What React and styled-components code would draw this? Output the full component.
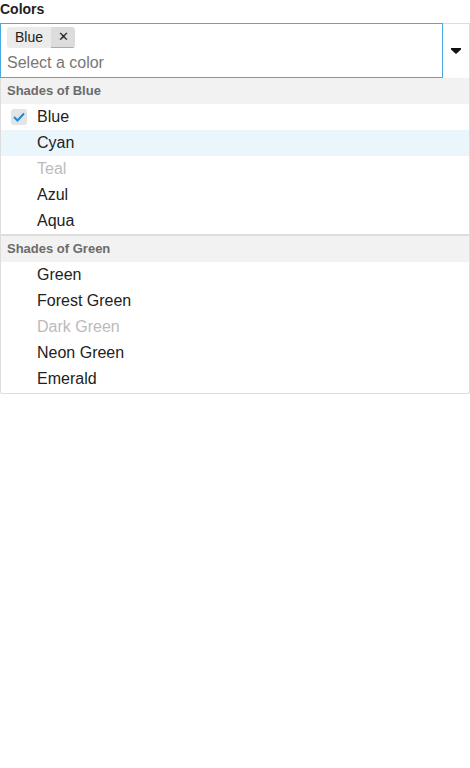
import React from 'react'
import styled, { createGlobalStyle } from 'styled-components'

const Global = createGlobalStyle`
  body {
    margin: 0;
    font-family: "Liberation Sans", Arial, sans-serif;
    background: #fff;
    color: #222;
  }
`

const Label = styled.div`
  font-size: 14px;
  font-weight: bold;
  line-height: 18px;
  height: 23px;
  color: #222;
`

const Combo = styled.div`
  display: flex;
  width: 470px;
  height: 55px;
`

const Field = styled.div`
  flex: 1;
  border: 1px solid #4ba9e2;
  padding: 3px 6px;
  display: flex;
  flex-direction: column;
  gap: 4px;
`

const Tags = styled.div`
  display: flex;
`

const Tag = styled.span`
  display: flex;
  height: 21px;
  border-radius: 3px;
  overflow: hidden;
  font-size: 14px;
`

const TagText = styled.span`
  background: #ebebeb;
  padding: 0 8px;
  line-height: 21px;
  color: #222;
`

const TagRemove = styled.span`
  background: #dcdcdc;
  width: 24px;
  line-height: 20px;
  text-align: center;
  border-bottom: 1px solid #aaa;
  color: #222;
  font-size: 13px;
`

const Placeholder = styled.div`
  font-size: 16px;
  line-height: 22px;
  color: #777;
`

const Toggle = styled.div`
  width: 26px;
  border-top: 1px solid #ddd;
  border-right: 1px solid #ddd;
  display: flex;
  align-items: center;
  justify-content: center;
`

const List = styled.div`
  width: 468px;
  border: 1px solid #ddd;
  border-top: none;
  border-radius: 0 0 3px 3px;
  padding-bottom: 1px;
  box-shadow: 0 2px 4px rgba(0, 0, 0, 0.08);
`

const Group = styled.div`
  & + & {
    border-top: 2px solid #ddd;
  }
`

const GroupHeader = styled.div`
  height: 26px;
  line-height: 26px;
  background: #f2f2f2;
  padding-left: 6px;
  font-size: 13px;
  font-weight: bold;
  color: #6b6b6b;
`

const Option = styled.div`
  display: flex;
  align-items: center;
  height: 26px;
  padding-left: 10px;
  font-size: 16px;
  background: ${p => (p.$active ? '#eaf5fc' : 'transparent')};
  color: ${p => (p.$disabled ? '#bbb' : '#222')};
`

const Check = styled.span`
  width: 16px;
  height: 16px;
  margin-right: 10px;
  border-radius: 3px;
  background: ${p => (p.$on ? '#e4e4e4' : 'transparent')};
  display: flex;
  align-items: center;
  justify-content: center;
`

const groups = [
  {
    title: 'Shades of Blue',
    items: [
      { name: 'Blue', selected: true },
      { name: 'Cyan', active: true },
      { name: 'Teal', disabled: true },
      { name: 'Azul' },
      { name: 'Aqua' },
    ],
  },
  {
    title: 'Shades of Green',
    items: [
      { name: 'Green' },
      { name: 'Forest Green' },
      { name: 'Dark Green', disabled: true },
      { name: 'Neon Green' },
      { name: 'Emerald' },
    ],
  },
]

export default function App() {
  return (
    <>
      <Global />
      <Label>Colors</Label>
      <Combo>
        <Field>
          <Tags>
            <Tag>
              <TagText>Blue</TagText>
              <TagRemove>✕</TagRemove>
            </Tag>
          </Tags>
          <Placeholder>Select a color</Placeholder>
        </Field>
        <Toggle>
          <svg width="10" height="6" viewBox="0 0 10 6">
            <path d="M0 0h10v1.5L5 6 0 1.5z" fill="#111" />
          </svg>
        </Toggle>
      </Combo>
      <List>
        {groups.map(g => (
          <Group key={g.title}>
            <GroupHeader>{g.title}</GroupHeader>
            {g.items.map(it => (
              <Option key={it.name} $active={it.active} $disabled={it.disabled}>
                <Check $on={it.selected}>
                  {it.selected && (
                    <svg width="12" height="10" viewBox="0 0 12 10">
                      <path d="M1 5l3.5 3.5L11 1.5" fill="none" stroke="#1f8ad6" strokeWidth="2" />
                    </svg>
                  )}
                </Check>
                {it.name}
              </Option>
            ))}
          </Group>
        ))}
      </List>
    </>
  )
}
